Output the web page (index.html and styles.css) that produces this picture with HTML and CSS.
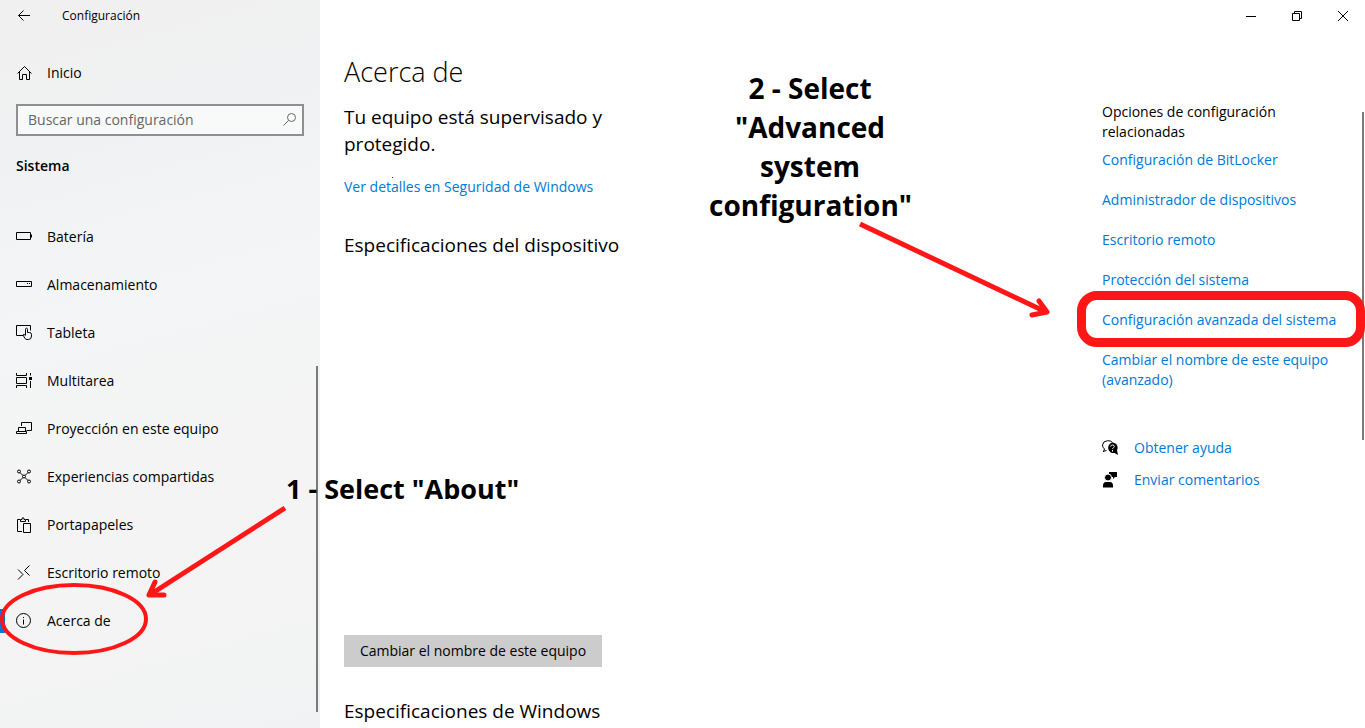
FILE: index.html
```html
<!DOCTYPE html>
<html lang="es">
<head>
<meta charset="utf-8">
<meta name="viewport" content="width=device-width, initial-scale=1">
<title>Configuración</title>
<link rel="stylesheet" href="styles.css">
</head>
<body>
<div class="window">
  <aside class="sidebar">
    <header class="titlebar">
      <button class="back" aria-label="Atrás"><svg class="icon" viewBox="0 0 16 16"><path d="M14 7.5H2.5M7.5 2.5l-5 5 5 5"/></svg></button>
      <span class="app-name">Configuración</span>
    </header>
    <a class="nav-link home" href="#"><svg class="icon" viewBox="0 0 16 16"><path d="M1.5 8.500L8.500 1.500L15.500 8.500M3.500 7V14.500H6.500V9.500H10.500V14.500H13.500V7"/></svg>Inicio</a>
    <form class="search">
      <input class="search-input" type="text" aria-label="Buscar una configuración" placeholder="Buscar una configuración">
      <svg class="icon search-icon" viewBox="0 0 16 16"><circle cx="9.500" cy="5.500" r="4"/><path d="M6.500 8.500L1.500 13.500"/></svg>
    </form>
    <h2 class="section">Sistema</h2>
    <nav class="nav">
      <a class="nav-link" href="#"><svg class="icon" viewBox="0 0 16 16"><path d="M.5 3.500h14v7H.500zM15.500 5.500v3"/></svg>Batería</a>
      <a class="nav-link" href="#"><svg class="icon" viewBox="0 0 16 16"><path d="M.5 4.500h15v5H.500zM11 6.500h1M13 6.500h1"/></svg>Almacenamiento</a>
      <a class="nav-link" href="#"><svg class="icon" viewBox="0 0 16 16"><path d="M7 10.500H.500V.500h14v5M9.500 10V4.500q0-1.300 1-1.300t1 1.300v3h2q2 0 2 2v1.500q0 3.500-3 3.500h-1.500q-1.500 0-2.300-1.500L7 10q.500-1.500 2.500 0.500"/></svg>Tableta</a>
      <a class="nav-link" href="#"><svg class="icon" viewBox="0 0 16 16"><path d="M.5 4.500h10v6H.500zM.5 0v2.500h10V0M.5 15v-2.500h10V15M14.500 0v2.500M14.500 8v7"/><path class="solid" d="M13 4h3v3h-3z"/></svg>Multitarea</a>
      <a class="nav-link" href="#"><svg class="icon" viewBox="0 0 16 16"><path d="M5.500 5V1.500h10v8h-5M2.500 10.500v-4h7v4M.5 10.500h10v2H.500z"/></svg>Proyección en este equipo</a>
      <a class="nav-link" href="#"><svg class="icon" viewBox="0 0 16 16"><circle cx="3" cy="2.500" r="1.500"/><circle cx="13" cy="2.500" r="1.500"/><circle cx="3" cy="12.500" r="1.500"/><circle cx="13" cy="12.500" r="1.500"/><path d="M4 3.500l3 3M12 3.500l-3 3M4 11.500l3-3M12 11.500l-3-3"/><circle cx="8" cy="7.500" r="1.500"/></svg>Experiencias compartidas</a>
      <a class="nav-link" href="#"><svg class="icon" viewBox="0 0 16 16"><path d="M6 14.500H1.500V2.500H4M10 2.500h2.500V5M4.500 4.500v-2h1.500q0-2 1-2t1 2h1.500v2zM7.500 6.500h7v9h-7z"/></svg>Portapapeles</a>
      <a class="nav-link" href="#"><svg class="icon" viewBox="0 0 16 16"><path d="M2 4.500l5 5-5 5M13.500 .500l-5 5 5 5"/></svg>Escritorio remoto</a>
      <a class="nav-link current" href="#" aria-current="page"><svg class="icon" viewBox="0 0 16 16"><circle cx="7.500" cy="7.500" r="7"/><path d="M7.500 6.500v5M7.500 4v1"/></svg>Acerca de
        <svg class="ring" viewBox="0 0 150 74"><ellipse cx="74" cy="36" rx="72" ry="34"/></svg>
      </a>
    </nav>
    <div class="scrollbar side-scroll"></div>
  </aside>

  <main class="page">
    <header class="caption">
      <button class="caption-button" aria-label="Minimizar"><svg class="icon" viewBox="0 0 16 16"><path d="M4 8.500h10"/></svg></button>
      <button class="caption-button" aria-label="Restaurar"><svg class="icon" viewBox="0 0 16 16"><path d="M4.500 5.500h7v7h-7zM6.500 5V3.500h7v7H12"/></svg></button>
      <button class="caption-button" aria-label="Cerrar"><svg class="icon" viewBox="0 0 16 16"><path d="M4 3l10 10M14 3l-10 10"/></svg></button>
    </header>
    <div class="columns">
      <section class="about">
        <h1 class="title">Acerca de</h1>
        <p class="status">Tu equipo está supervisado y protegido.</p>
        <a class="link security" href="#">Ver detalles en Seguridad de Windows</a>
        <h2 class="subtitle">Especificaciones del dispositivo</h2>
        <button class="rename">Cambiar el nombre de este equipo</button>
        <h2 class="subtitle">Especificaciones de Windows</h2>
      </section>
      <aside class="related">
        <h2 class="related-title">Opciones de configuración relacionadas</h2>
        <ul class="related-list">
          <li><a class="link" href="#">Configuración de BitLocker</a></li>
          <li><a class="link" href="#">Administrador de dispositivos</a></li>
          <li><a class="link" href="#">Escritorio remoto</a></li>
          <li><a class="link" href="#">Protección del sistema</a></li>
          <li class="marked"><a class="link" href="#">Configuración avanzada del sistema</a></li>
          <li><a class="link" href="#">Cambiar el nombre de este equipo (avanzado)</a></li>
        </ul>
        <a class="link help" href="#"><svg class="icon" viewBox="0 0 16 16"><path d="M1.500 11.500l1-2.500Q.500 7.500 .500 5 1 1 5.500.700 9 .500 10.500 2.500M1 11.500l3.500-1"/><path class="solid" d="M10.500 2.500a5.200 5.200 0 0 1 4.500 7.700l1 4.800-3.500-2A5.300 5.300 0 1 1 10.500 2.500z"/><path class="mark" d="M8.700 6.500q0-1.500 1.800-1.500t1.800 1.500q0 .800-.900 1.300t-.9 1.300M10.500 10v1.500"/></svg>Obtener ayuda</a>
        <a class="link help" href="#"><svg class="icon" viewBox="0 0 16 16"><path class="solid" d="M7 0h8v5h-2l-2 2V5H7zM1 15.500v-1.500Q1 10 4 10h4q3 0 3 4v1.500z"/><circle class="solid head" cx="6" cy="5.500" r="3.500"/></svg>Enviar comentarios</a>
      </aside>
      <div class="scrollbar page-scroll"></div>
    </div>
    <div class="callout advanced">2 - Select "Advanced system configuration"</div>
    <svg class="arrow advanced-arrow" viewBox="0 0 200 104"><path d="M6 7L192 95"/><path class="tip" d="M185 84L193 95L178 98"/></svg>
  </main>
  <div class="callout about-note">1 - Select "About"</div>
  <svg class="arrow about-arrow" viewBox="0 0 146 100"><path d="M140 7L6 93"/><path class="tip" d="M10 81L4 94L19 94"/></svg>
  <span class="speck"></span>
</div>
</body>
</html>
```
FILE: styles.css
```css
*, *::before, *::after { box-sizing: border-box; }

body {
  margin: 0;
  background: #fff;
  color: #000;
  font: 14px/20px "Open Sans", "Noto Sans", sans-serif;
}

h1, h2, p, ul { margin: 0; padding: 0; font-weight: 400; }
ul { list-style: none; }
button { border: 0; padding: 0; background: none; font: inherit; color: inherit; }
a { color: inherit; text-decoration: none; }

.window {
  position: relative;
  display: grid;
  grid-template-columns: 320px 1fr;
  min-height: 100vh;
  overflow: hidden;
}

.icon {
  flex: none;
  width: 16px;
  height: 16px;
  fill: none;
  stroke: #000;
  stroke-width: 1;
}
.icon .solid { fill: #000; stroke: none; }
.icon .head { stroke: #fff; }
.icon .mark { stroke: #fff; }

/* Sidebar */
.sidebar {
  position: relative;
  background: linear-gradient(165deg, #f0f0f0 0%, #f0f1f2 20%, #f4f5f6 40%, #f4f4f4 75%, #f1f2f3 100%);
}
.titlebar {
  display: flex;
  align-items: center;
  gap: 30px;
  height: 32px;
  padding-left: 16px;
  font-size: 12px;
}
.back { display: flex; }
.nav-link {
  position: relative;
  display: flex;
  align-items: center;
  gap: 15px;
  height: 48px;
  padding-left: 16px;
}
.home { margin-top: 17px; }
.search {
  display: flex;
  align-items: center;
  height: 32px;
  margin: 7px 16px 0;
  padding: 0 4px 0 10px;
  border: 2px solid #8e8f8f;
  background: #f8f9f9;
}
.search-input {
  flex: 1;
  min-width: 0;
  padding: 0;
  border: 0;
  outline: 0;
  background: none;
  font: inherit;
}
.search-input::placeholder { color: #666; opacity: 1; }
.search-icon { stroke: #666; }
.section {
  margin: 20px 0 37px 16px;
  font-size: 14px;
  font-weight: 600;
}
.current::before {
  content: "";
  position: absolute;
  left: 0;
  width: 5px;
  height: 24px;
  background: #0078d7;
}
.ring {
  position: absolute;
  top: -14px;
  left: 0;
  width: 150px;
  height: 74px;
  fill: none;
  stroke: #ff1616;
  stroke-width: 4;
}
.scrollbar { position: absolute; width: 2px; background: #7a7a7a; }
.side-scroll { top: 366px; right: 2px; height: 346px; }
.page-scroll { top: 80px; right: 1px; height: 328px; }

/* Page */
.page { position: relative; }
.caption {
  display: flex;
  justify-content: flex-end;
  height: 32px;
}
.caption-button {
  display: grid;
  place-items: center;
  width: 46px;
}
.columns {
  position: relative;
  display: flex;
  justify-content: space-between;
  padding: 22px 19px 0 24px;
}
.about { width: 280px; }
.title { font-size: 27px; font-weight: 300; line-height: 36px; }
.status { margin-top: 14px; font-size: 19px; line-height: 27px; }
.link { color: #0078d7; }
.security { display: block; margin-top: 19px; }
.subtitle { margin-top: 34px; font-size: 19px; line-height: 28px; }
.rename {
  display: block;
  min-width: 258px;
  height: 32px;
  margin-top: 376px;
  padding: 0 14px;
  background: #ccc;
}
.rename + .subtitle { margin-top: 30px; }
.related { width: 244px; padding-top: 48px; }
.related-title { font-size: 14px; }
.related-list {
  display: grid;
  gap: 20px;
  margin: 8px 0 48px;
}
.marked { position: relative; white-space: nowrap; }
.marked::after {
  content: "";
  position: absolute;
  top: -19px;
  left: -25px;
  width: 288px;
  height: 56px;
  border: 9px solid #ff1616;
  border-radius: 20px;
  z-index: 1;
}
.help {
  display: flex;
  align-items: center;
  gap: 16px;
  margin-bottom: 12px;
}

/* Annotations */
.callout {
  position: absolute;
  font-size: 28px;
  font-weight: 700;
  line-height: 39px;
}
.advanced {
  top: 69px;
  right: 454px;
  width: 202px;
  text-align: center;
}
.about-note { top: 469px; left: 286px; font-size: 27px; white-space: nowrap; }
.arrow {
  position: absolute;
  fill: none;
  stroke: #ff1616;
  stroke-width: 5;
}
.arrow .tip { stroke-linecap: round; stroke-linejoin: round; }
.advanced-arrow { top: 217px; right: 311px; width: 200px; height: 104px; }
.about-arrow { top: 501px; left: 145px; width: 146px; height: 100px; }
.speck {
  position: absolute;
  top: 177px;
  left: 392px;
  width: 1px;
  height: 1px;
  background: #1a1aff;
}
```
